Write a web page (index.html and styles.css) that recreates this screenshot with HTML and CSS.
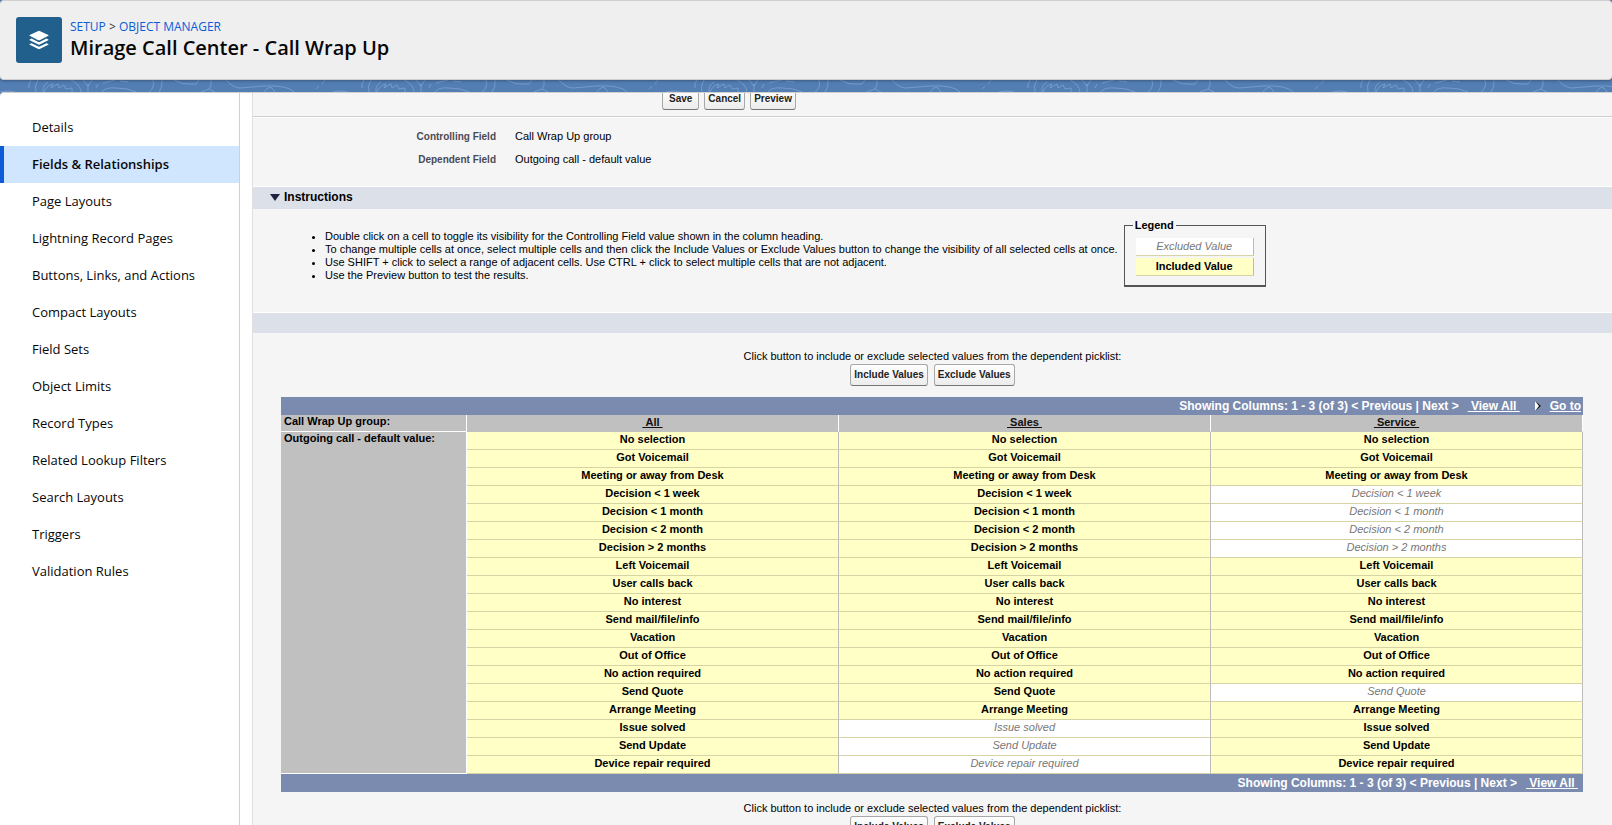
FILE: index.html
```html
<!DOCTYPE html>
<html lang="en">
<head>
<meta charset="utf-8">
<title>Mirage Call Center - Call Wrap Up</title>
<link rel="stylesheet" href="styles.css">
</head>
<body>
<header class="page-header">
  <svg class="page-icon" viewBox="0 0 46 46" aria-hidden="true">
    <rect width="46" height="46" rx="3" fill="#215f8c"/>
    <g fill="#fff">
      <path d="M22.300 14q.7-.4 1.400 0L32.300 18q.6.4 0 .8L23.700 23.200q-.7.300-1.400 0L13.700 18.800q-.6-.4 0-.8z"/>
      <path d="M13.700 22.400l1.800-.8 6.800 3.400q.7.300 1.400 0l6.800-3.400 1.800.8q.6.400 0 .8l-8.600 4.300q-.7.300-1.400 0l-8.600-4.300q-.6-.4 0-.8z"/>
      <path d="M13.700 27l1.800-.8 6.800 3.400q.7.300 1.400 0l6.800-3.400 1.800.8q.6.400 0 .8l-8.600 4.300q-.7.300-1.400 0l-8.600-4.300q-.6-.4 0-.8z"/>
    </g>
  </svg>
  <div>
    <nav class="breadcrumb"><a href="#">SETUP</a> &gt; <a href="#">OBJECT MANAGER</a></nav>
    <h1 class="page-title">Mirage Call Center - Call Wrap Up</h1>
  </div>
</header>
<svg class="band" aria-hidden="true">
  <defs>
    <pattern id="topo" width="333" height="12" patternUnits="userSpaceOnUse">
      <g fill="none" stroke="#8fb0da" stroke-width="1" stroke-opacity=".55">
        <path d="M0 12Q8 10 15 12M31 0q-3 4-2 8M36 12q-2-6 2-12M43 12q-1-6 5-10M44 12q3-7 9-8l-2 4 7-4 1 4 5-3 2 4 6-1 0 4M71 0q9 4 10 12M88 12l0-8M83 0l5 6 4-6M96 8l2-4M103 3l12-3M120 1l8 1M102 12q3-5 14-4 12 0 20 4M153 0q2 8-4 12M162 0q1 7-3 12M174 0q9 5 16 4l6 0 3-4M211 0q1 6-2 9l-8 3M209 9l6 3M226 0q7 8 14 8l24-2q24-1 30 6M264 12q4-6 8-4l3 4M316 9l3-3M322 4l3-4"/>
      </g>
    </pattern>
  </defs>
  <rect width="100%" height="100%" fill="url(#topo)"/>
</svg>
<div class="workspace">
  <nav class="sidebar" aria-label="Object settings">
    <a href="#">Details</a>
    <a href="#" class="active" aria-current="page">Fields &amp; Relationships</a>
    <a href="#">Page Layouts</a>
    <a href="#">Lightning Record Pages</a>
    <a href="#">Buttons, Links, and Actions</a>
    <a href="#">Compact Layouts</a>
    <a href="#">Field Sets</a>
    <a href="#">Object Limits</a>
    <a href="#">Record Types</a>
    <a href="#">Related Lookup Filters</a>
    <a href="#">Search Layouts</a>
    <a href="#">Triggers</a>
    <a href="#">Validation Rules</a>
  </nav>
  <main class="content">
    <div class="toolbar"><button type="button">Save</button><button type="button">Cancel</button><button type="button">Preview</button></div>
    <dl class="fields">
      <dt>Controlling Field</dt><dd>Call Wrap Up group</dd>
      <dt>Dependent Field</dt><dd>Outgoing call - default value</dd>
    </dl>
    <h2 class="section-bar"><svg width="10" height="7" viewBox="0 0 10 7" aria-hidden="true"><path d="M0 0h10L5 7z" fill="#1f2340"/></svg>Instructions</h2>
    <div class="instructions">
      <ul>
        <li>Double click on a cell to toggle its visibility for the Controlling Field value shown in the column heading.</li>
        <li>To change multiple cells at once, select multiple cells and then click the Include Values or Exclude Values button to change the visibility of all selected cells at once.</li>
        <li>Use SHIFT + click to select a range of adjacent cells. Use CTRL + click to select multiple cells that are not adjacent.</li>
        <li>Use the Preview button to test the results.</li>
      </ul>
      <fieldset class="legend">
        <legend>Legend</legend>
        <div class="swatch off">Excluded Value</div>
        <div class="swatch">Included Value</div>
      </fieldset>
    </div>
    <div class="section-bar blank"></div>
    <div class="actions">
      <p>Click button to include or exclude selected values from the dependent picklist:</p>
      <div class="buttons"><button type="button">Include Values</button><button type="button">Exclude Values</button></div>
    </div>
    <div class="grid">
      <div class="pager"><span>Showing Columns: 1 - 3 (of 3) &lt; Previous | Next &gt;</span><a href="#">&nbsp;View All&nbsp;</a><svg width="6" height="10" viewBox="0 0 6 10" aria-hidden="true"><path d="M0 0l6 5-6 5z" fill="#111"/><path d="M0 0l4 5-4 5z" fill="#fff"/></svg><a href="#">Go to</a></div>
      <table class="matrix">
        <colgroup><col class="label-col"><col><col><col></colgroup>
        <thead><tr><th class="row-label" scope="row">Call Wrap Up group:</th><th scope="col"><a href="#">&nbsp;All&nbsp;</a></th><th scope="col"><a href="#">&nbsp;Sales&nbsp;</a></th><th scope="col"><a href="#">&nbsp;Service&nbsp;</a></th></tr></thead>
        <tbody>
          <tr><th class="row-label" scope="rowgroup" rowspan="19">Outgoing call - default value:</th><td>No selection</td><td>No selection</td><td>No selection</td></tr>
          <tr><td>Got Voicemail</td><td>Got Voicemail</td><td>Got Voicemail</td></tr>
          <tr><td>Meeting or away from Desk</td><td>Meeting or away from Desk</td><td>Meeting or away from Desk</td></tr>
          <tr><td>Decision &lt; 1 week</td><td>Decision &lt; 1 week</td><td class="off">Decision &lt; 1 week</td></tr>
          <tr><td>Decision &lt; 1 month</td><td>Decision &lt; 1 month</td><td class="off">Decision &lt; 1 month</td></tr>
          <tr><td>Decision &lt; 2 month</td><td>Decision &lt; 2 month</td><td class="off">Decision &lt; 2 month</td></tr>
          <tr><td>Decision &gt; 2 months</td><td>Decision &gt; 2 months</td><td class="off">Decision &gt; 2 months</td></tr>
          <tr><td>Left Voicemail</td><td>Left Voicemail</td><td>Left Voicemail</td></tr>
          <tr><td>User calls back</td><td>User calls back</td><td>User calls back</td></tr>
          <tr><td>No interest</td><td>No interest</td><td>No interest</td></tr>
          <tr><td>Send mail/file/info</td><td>Send mail/file/info</td><td>Send mail/file/info</td></tr>
          <tr><td>Vacation</td><td>Vacation</td><td>Vacation</td></tr>
          <tr><td>Out of Office</td><td>Out of Office</td><td>Out of Office</td></tr>
          <tr><td>No action required</td><td>No action required</td><td>No action required</td></tr>
          <tr><td>Send Quote</td><td>Send Quote</td><td class="off">Send Quote</td></tr>
          <tr><td>Arrange Meeting</td><td>Arrange Meeting</td><td>Arrange Meeting</td></tr>
          <tr><td>Issue solved</td><td class="off">Issue solved</td><td>Issue solved</td></tr>
          <tr><td>Send Update</td><td class="off">Send Update</td><td>Send Update</td></tr>
          <tr><td>Device repair required</td><td class="off">Device repair required</td><td>Device repair required</td></tr>
        </tbody>
      </table>
      <div class="pager bottom"><span>Showing Columns: 1 - 3 (of 3) &lt; Previous | Next &gt;</span><a href="#">&nbsp;View All&nbsp;</a></div>
    </div>
    <div class="actions below">
      <p>Click button to include or exclude selected values from the dependent picklist:</p>
      <div class="buttons"><button type="button">Include Values</button><button type="button">Exclude Values</button></div>
    </div>
  </main>
</div>
</body>
</html>
```
FILE: styles.css
```css
* { box-sizing: border-box; }
body {
  display: flex;
  flex-direction: column;
  height: 100vh;
  margin: 0;
  overflow: hidden;
  background: #527eb4;
  color: #000;
  font: 11px/13px "Liberation Sans", Arial, sans-serif;
}
.page-header {
  display: flex;
  flex: none;
  gap: 8px;
  padding: 16px;
  border: solid #cfcfcf;
  border-width: 1px 0;
  border-radius: 4px;
  background: #efefef;
  box-shadow: 0 1px 3px rgba(0, 0, 0, .3);
  font-family: "Open Sans", sans-serif;
  z-index: 1;
}
.page-icon { flex: none; width: 46px; height: 46px; }
.breadcrumb { font-size: 12px; line-height: 19px; color: #333; }
.breadcrumb a { color: #0b5cd6; text-decoration: none; }
.page-title { margin: 0; font-size: 20px; line-height: 24px; font-weight: 600; color: #080707; }
.band { display: block; flex: none; width: 100%; height: 12px; }
.workspace {
  display: flex;
  flex: 1;
  min-height: 0;
  overflow: hidden;
  border-top: 1px solid #d0d0d0;
  border-radius: 4px 0 0;
  background: #fff;
}
.sidebar {
  flex: none;
  width: 240px;
  padding-top: 16px;
  border-right: 1px solid #d0d0d0;
  font: 13px/37px "Open Sans", sans-serif;
}
.sidebar a { display: block; padding-left: 32px; color: #080707; text-decoration: none; }
.sidebar .active { padding-left: 28px; border-left: 4px solid #0b5cd6; background: #d0e6ff; font-weight: 600; }
.content {
  flex: 1;
  min-width: 0;
  margin-left: 12px;
  overflow: hidden;
  border-left: 1px solid #e0e0e0;
  background: #f5f5f5;
}
button {
  height: 22px;
  padding: 0 3px;
  border: 1px solid #a8a8a8;
  border-bottom-color: #757575;
  border-radius: 3px;
  background: linear-gradient(#fff, #ececec);
  color: #222;
  font: bold 10px/18px "Liberation Sans", Arial, sans-serif;
}
.toolbar { display: flex; gap: 5px; height: 24px; padding-left: 409px; border-bottom: 1px solid #cfcfcf; box-shadow: 0 1px #fff; }
.toolbar button { margin-top: -5px; }
.toolbar button:first-child { padding: 0 6px; }
.fields { display: grid; grid-template-columns: 243px 1fr; gap: 10px 19px; margin: 0; padding: 13px 0 20px; }
.fields dt { color: #4a4a56; font-size: 10px; font-weight: 700; text-align: right; }
.fields dd { margin: 0; }
.section-bar {
  display: flex;
  align-items: center;
  gap: 4px;
  height: 23px;
  margin: 0;
  padding: 0 0 1px 17px;
  border-top: 1px solid #fff;
  background: #dce0e9;
  font-size: 12px;
}
.section-bar.blank { height: 21px; }
.instructions { display: flex; gap: 6px; height: 103px; padding: 10px 0 0 32px; }
.instructions ul { margin: 11px 0 0; padding-left: 40px; white-space: nowrap; }
.legend { flex: none; width: 142px; height: 68px; margin: 0; padding: 6px 11px; border: 1px solid #555; border-bottom-width: 2px; }
.legend legend { padding: 0 2px; margin-left: -3px; font-weight: 700; }
.swatch {
  height: 18px;
  margin-bottom: 2px;
  border: solid;
  border-width: 0 1px 1px 0;
  border-color: #bbb #bbb #d6d3a5;
  background: #ffffc6;
  font-weight: 700;
  line-height: 16px;
  text-align: center;
}
.off { background: #fff; color: #777; font-style: italic; font-weight: 400; }
.actions { padding: 17px 0 11px; text-align: center; }
.actions.below { padding-top: 10px; }
.actions p { margin: 0 0 1px; }
.buttons { display: flex; justify-content: center; gap: 6px; }
.grid { margin: 0 29px 0 28px; }
.pager {
  display: flex;
  align-items: center;
  justify-content: flex-end;
  gap: 9px;
  height: 18px;
  padding-right: 2px;
  background: #7b8bb0;
  color: #fff;
  font-size: 12px;
  font-weight: 700;
  line-height: 17px;
}
.pager.bottom { padding-right: 5px; }
.pager a { color: inherit; }
.pager svg { margin-left: 6px; }
.matrix { width: 100%; border-collapse: separate; border-spacing: 0; table-layout: fixed; }
.matrix th, .matrix td { height: 18px; padding: 0; border: solid; border-width: 0 1px 1px 0; font-weight: 700; line-height: 15px; text-align: center; vertical-align: top; }
.matrix th { height: 17px; border-color: #fff; border-bottom-color: #c0c0c0; background: #c0c0c0; }
.matrix td { border-color: #bbb #bbb #d6d3a5; background: #ffffc6; }
.matrix a { color: #111; }
.matrix .row-label { padding-left: 3px; border-bottom-color: #fff; line-height: 12px; text-align: left; }
.matrix .off { background: #fff; font-weight: 400; }
.label-col { width: 186px; }
```
